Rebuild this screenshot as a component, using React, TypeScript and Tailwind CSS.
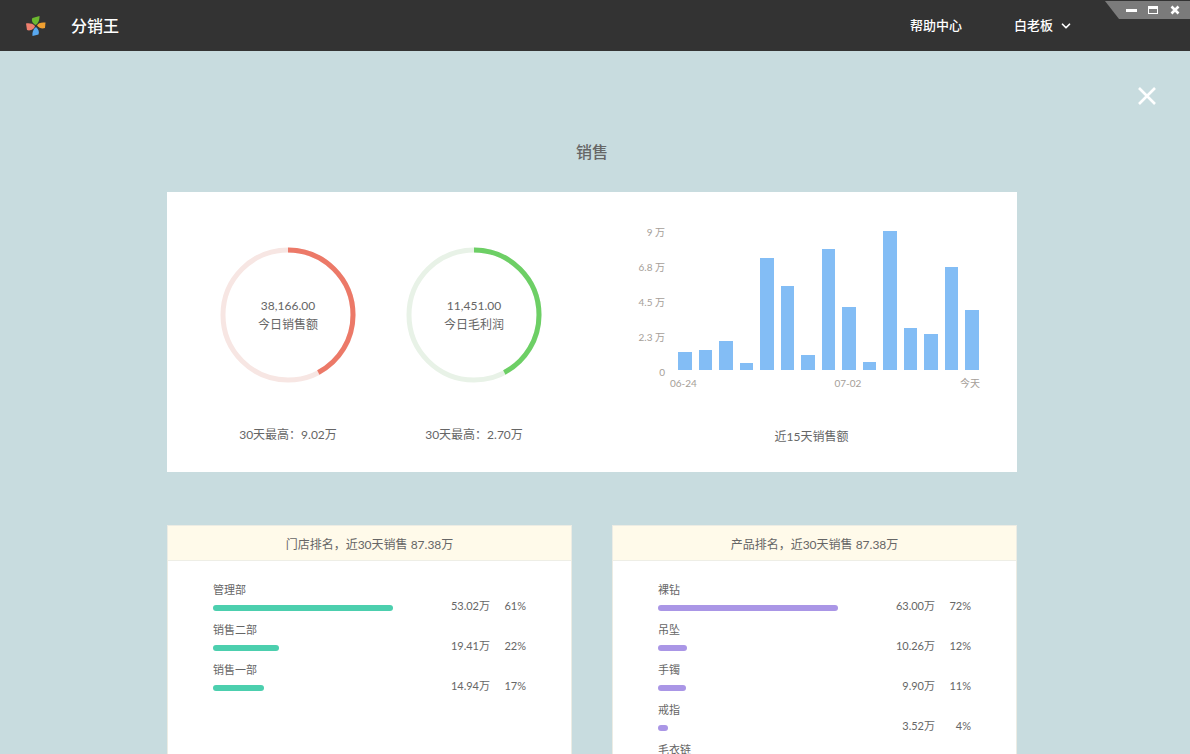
import { ChevronDown } from "lucide-react";

const FONT = "font-['Lato','Noto_Sans_CJK_SC',sans-serif]";

const BARS = [18, 20, 29, 7, 112, 84, 15, 121, 63, 8, 139, 42, 36, 103, 60];
const Y_LABELS = ["9 万", "6.8 万", "4.5 万", "2.3 万", "0"];

const STORES = [
  { name: "管理部", width: 180, value: "53.02万", pct: "61%" },
  { name: "销售二部", width: 66, value: "19.41万", pct: "22%" },
  { name: "销售一部", width: 51, value: "14.94万", pct: "17%" },
];

const PRODUCTS = [
  { name: "裸钻", width: 180, value: "63.00万", pct: "72%" },
  { name: "吊坠", width: 29, value: "10.26万", pct: "12%" },
  { name: "手镯", width: 28, value: "9.90万", pct: "11%" },
  { name: "戒指", width: 10, value: "3.52万", pct: "4%" },
  { name: "毛衣链", width: 8, value: "", pct: "" },
];

function Logo() {
  return (
    <svg width="22" height="22" viewBox="0 0 22 22">
      <path d="M10.5 10 C7.5 8.5 6 5 7.5 3 L14.5 1 C14.5 4 14 8 10.5 10Z" fill="#6cb82f" />
      <path d="M12 10.5 C13 8 16 7 20.5 7.5 L20 13 C17 14 14 13 12 10.5Z" fill="#f0a030" />
      <path d="M11 12 C13.5 14 14.5 17 13.5 19.5 L7.5 21 C7 18 8 14 11 12Z" fill="#58a8f0" />
      <path d="M10 11 C9.5 14 5 16.5 2 15 L1 8.5 C4 8 8 8.5 10 11Z" fill="#ee7f6e" />
    </svg>
  );
}

function WindowControls() {
  return (
    <div className="absolute right-0 top-px flex h-[18px] w-[85px] items-center justify-end gap-[11px] bg-[#7b7b7b] pr-[10px] [clip-path:polygon(0_0,100%_0,100%_100%,14px_100%)]">
      <span className="h-[3px] w-[11px] bg-white" />
      <span className="h-[8px] w-[10px] border border-t-[3px] border-white" />
      <svg width="10" height="10" viewBox="0 0 10 10" className="ml-px">
        <path d="M1.5 1.5 L8.5 8.5 M8.5 1.5 L1.5 8.5" stroke="#fff" strokeWidth="2.6" />
      </svg>
    </div>
  );
}

function Donut({ color, track, value, label, max }: { color: string; track: string; value: string; label: string; max: string }) {
  const r = 65;
  const circumference = 2 * Math.PI * r;
  return (
    <div className="flex w-[136px] flex-col items-center">
      <div className="relative h-[136px] w-[136px]">
        <svg width="136" height="136" viewBox="0 0 136 136" className="-rotate-90">
          <circle cx="68" cy="68" r={r} fill="none" stroke={track} strokeWidth="5" />
          <circle cx="68" cy="68" r={r} fill="none" stroke={color} strokeWidth="5" strokeDasharray={`${circumference * 0.422} ${circumference}`} />
        </svg>
        <div className="absolute inset-0 flex flex-col items-center justify-center text-[12px] leading-[19px] text-[#666]">
          <span>{value}</span>
          <span>{label}</span>
        </div>
      </div>
      <div className="mt-[42px] whitespace-nowrap text-[12px] leading-[20px] text-[#666]">{max}</div>
    </div>
  );
}

function BarChart() {
  return (
    <div className="flex flex-col items-start">
      <div className="flex items-start">
        <div className="flex h-[154px] w-[37px] flex-col justify-between text-right text-[10px] leading-[14px] text-[#a59e98]">
          {Y_LABELS.map((l) => (
            <span key={l} className="whitespace-nowrap">{l}</span>
          ))}
        </div>
        <div className="ml-[13px] mt-[6px] flex h-[139px] items-end gap-[7px]">
          {BARS.map((h, i) => (
            <div key={i} className="w-[13.5px] bg-[#83bdf5]" style={{ height: h }} />
          ))}
        </div>
      </div>
      <div className="ml-[42px] mt-[-3px] flex w-[310px] justify-between text-[10px] leading-[14px] text-[#a59e98]">
        <span>06-24</span>
        <span className="ml-[39px]">07-02</span>
        <span>今天</span>
      </div>
      <div className="ml-[42px] mt-[37px] w-[283px] text-center text-[12px] leading-[20px] text-[#666]">近15天销售额</div>
    </div>
  );
}

function RankCard({ title, rows, barColor }: { title: string; rows: typeof STORES; barColor: string }) {
  return (
    <div className="h-[300px] border border-[#ecece4] bg-white">
      <div className="flex h-[35px] items-center justify-center border-b border-[#eeeee6] bg-[#fffaea] pt-[4px] text-[12px] text-[#666]">{title}</div>
      <div className="pl-[45px] pt-[19px]">
        {rows.map((row) => (
          <div key={row.name} className="flex h-[40px] items-start">
            <div className="w-[180px]">
              <div className="text-[11px] leading-[20px] text-[#666]">{row.name}</div>
              <div className="mt-[5px] h-[6px] rounded-full" style={{ width: row.width, backgroundColor: barColor }} />
            </div>
            <div className="mt-[16px] w-[97px] text-right text-[11px] leading-[20px] text-[#666]">{row.value}</div>
            <div className="mt-[16px] w-[36px] text-right text-[11px] leading-[20px] text-[#666]">{row.pct}</div>
          </div>
        ))}
      </div>
    </div>
  );
}

export default function App() {
  return (
    <div className={`relative h-[754px] w-[1190px] overflow-hidden bg-[#c8dcdf] ${FONT}`}>
      <header className="flex h-[51px] items-center bg-[#333] text-white">
        <div className="ml-[25px]"><Logo /></div>
        <div className="ml-[24px] text-[16px] font-medium">分销王</div>
        <div className="ml-auto text-[13px] font-medium">帮助中心</div>
        <div className="ml-[52px] text-[13px] font-medium">白老板</div>
        <ChevronDown className="ml-[6px] mr-[117px] h-[14px] w-[14px]" strokeWidth={3} />
      </header>
      <WindowControls />

      <svg width="18" height="18" viewBox="0 0 18 18" className="absolute left-[1138px] top-[87px]">
        <path d="M1 1 L17 17 M17 1 L1 17" stroke="#fff" strokeWidth="2.6" />
      </svg>

      <main className="ml-[167px] w-[850px] pt-[89px]">
        <h1 className="text-center text-[16px] font-medium leading-[24px] text-[#666]">销售</h1>

        <section className="mt-[28px] flex h-[280px] bg-white pl-[53px] pt-[55px]">
          <Donut color="#ec7968" track="#f7e6e3" value="38,166.00" label="今日销售额" max="30天最高：9.02万" />
          <div className="ml-[50px]">
            <Donut color="#6dcf65" track="#e8f2e7" value="11,451.00" label="今日毛利润" max="30天最高：2.70万" />
          </div>
          <div className="ml-[86px] mt-[-22px]">
            <BarChart />
          </div>
        </section>

        <section className="mt-[53px] grid grid-cols-2 gap-[40px]">
          <RankCard title="门店排名，近30天销售 87.38万" rows={STORES} barColor="#4ccfae" />
          <RankCard title="产品排名，近30天销售 87.38万" rows={PRODUCTS} barColor="#aa96e6" />
        </section>
      </main>
    </div>
  );
}
